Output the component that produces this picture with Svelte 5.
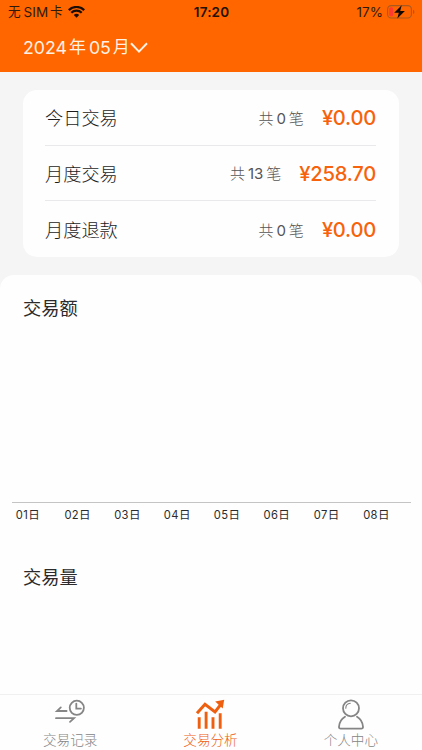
<script lang="ts">
  const month = { year: '2024', month: '05' };

  const summary = [
    { label: '今日交易', count: 0, amount: '0.00' },
    { label: '月度交易', count: 13, amount: '258.70' },
    { label: '月度退款', count: 0, amount: '0.00' },
  ];

  const days = ['01', '02', '03', '04', '05', '06', '07', '08'];

  const tabs = [
    { id: 'records', label: '交易记录' },
    { id: 'analysis', label: '交易分析' },
    { id: 'profile', label: '个人中心' },
  ];

  let activeTab = $state('analysis');
</script>

<div class="screen">
  <header>
    <div class="status-bar">
      <div class="carrier">
        <span class="cjk">无</span><span class="sim">SIM</span><span class="cjk">卡</span>
        <svg class="wifi" width="17" height="12" viewBox="0 0 17 12">
          <path d="M.8 4.1a11 11 0 0 1 15.4 0" />
          <path d="M3.3 6.7a7.4 7.4 0 0 1 10.4 0" />
          <path class="dot" d="M8.5 11.8 5.8 9a3.9 3.9 0 0 1 5.4 0z" />
        </svg>
      </div>
      <div class="clock">17:20</div>
      <div class="power">
        <span>17%</span>
        <svg width="28" height="14" viewBox="0 0 28 14">
          <rect class="shell" x=".6" y=".6" width="23.8" height="12.4" rx="3.6" />
          <rect class="level" x="2.2" y="2.3" width="4" height="9" rx="1.5" />
          <path class="tip" d="M26 4.8q1.4.6 1.4 2.1T26 9z" />
          <path class="bolt" d="M14.7.2 7.2 7.7h4.6L10.3 13.6 17.9 5.9h-4.7z" />
        </svg>
      </div>
    </div>
    <button class="month">
      <span class="num">{month.year}</span><span class="unit">年</span><span class="num">{month.month}</span><span class="unit">月</span>
      <svg width="18" height="12" viewBox="0 0 18 12">
        <path d="M1 1.2 9 9.6l8-8.4" />
      </svg>
    </button>
  </header>

  <main>
    <section class="card">
      {#each summary as row}
        <div class="row">
          <span class="label">{row.label}</span>
          <span class="count">共<i>{row.count}</i>笔</span>
          <span class="amount">¥{row.amount}</span>
        </div>
      {/each}
    </section>

    <section class="panel">
      <h2>交易额</h2>
      <div class="plot"></div>
      <div class="axis">
        {#each days as day}
          <span>{day}<b>日</b></span>
        {/each}
      </div>
      <h2 class="second">交易量</h2>
    </section>
  </main>

  <nav>
    {#each tabs as tab}
      <button class="tab" class:active={activeTab === tab.id} onclick={() => (activeTab = tab.id)}>
        {#if tab.id === 'records'}
          <svg width="32" height="32" viewBox="0 0 32 32">
            <circle cx="22.8" cy="8.8" r="7.1" />
            <path d="M22.3 4.6v5h4.6M12.6 12H3l3.8-3.6M2 19.2h18l-4 3.6" />
          </svg>
        {:else if tab.id === 'analysis'}
          <svg width="32" height="32" viewBox="0 0 32 32">
            <path class="trend" d="m3 14.3 8-9 10 7.6 6-7.6" />
            <path class="head" d="m21.2 2.6 9-1.8-1.5 8.6z" />
            <path class="bars" d="M5.2 18.2v11.5M12.1 12.7v17M19 18.2v11.5M26.2 14.2v15.5" />
          </svg>
        {:else}
          <svg width="32" height="32" viewBox="0 0 32 32">
            <circle cx="16" cy="9.3" r="8" />
            <path class="shine" d="M10.8 9.2c0-2.7 1.8-4.7 4.5-5" />
            <path d="M10 17.7C6 20 4.3 23.8 4 27.7c-.1 1.2.6 1.9 1.7 1.9h20.6c1.1 0 1.8-.7 1.7-1.9-.3-3.9-2-7.7-6-10" />
          </svg>
        {/if}
        <span>{tab.label}</span>
      </button>
    {/each}
  </nav>
</div>

<style>
  :global(body) {
    margin: 0;
  }

  .screen {
    display: flex;
    flex-direction: column;
    width: 422px;
    height: 750px;
    overflow: hidden;
    background: #f5f5f5;
    color: #2b2b2b;
    font-family: Inter, 'Noto Sans CJK SC', sans-serif;
  }

  button {
    padding: 0;
    border: 0;
    background: none;
    font: inherit;
  }

  svg {
    flex: none;
    fill: none;
    stroke: currentColor;
  }

  header {
    flex: none;
    height: 72px;
    background: #ff6600;
  }

  .status-bar {
    display: grid;
    grid-template-columns: 1fr auto 1fr;
    align-items: center;
    height: 24px;
    padding: 0 7px 0 8px;
    color: #30190a;
    font-size: 13.5px;
    line-height: 24px;
  }

  .carrier,
  .power {
    display: flex;
    align-items: center;
  }

  .carrier .cjk {
    font-size: 12.6px;
  }

  .carrier .sim {
    margin: 0 2px 0 3px;
  }

  .wifi {
    margin-left: 5px;
    color: #1b0d04;
    stroke-width: 2.2;
  }

  .wifi .dot {
    fill: currentColor;
    stroke: none;
  }

  .clock {
    color: #241105;
    font-weight: 600;
    letter-spacing: 0.15px;
  }

  .power {
    justify-content: flex-end;
    gap: 4px;
  }

  .power .shell {
    stroke: #a9581f;
    stroke-width: 1.1;
  }

  .power .level {
    fill: #ff3b30;
    stroke: none;
  }

  .power .tip {
    fill: #a9581f;
    stroke: none;
  }

  .power .bolt {
    fill: #120800;
    stroke: none;
  }

  .month {
    display: flex;
    align-items: center;
    height: 47px;
    padding-left: 23px;
    color: #fff1e4;
    font-size: 17.7px;
    line-height: 47px;
  }

  .month .unit {
    margin: 0 3px 0 2px;
    font-size: 17px;
  }

  .month .unit:last-of-type {
    margin-right: 0;
  }

  .month svg {
    stroke-width: 2;
  }

  main {
    flex: 1;
    display: flex;
    flex-direction: column;
    min-height: 0;
    padding-top: 18px;
  }

  .card {
    flex: none;
    margin: 0 23px;
    padding: 0 23px 0 22px;
    border-radius: 14px;
    background: #fefefe;
  }

  .row {
    display: flex;
    align-items: center;
    box-sizing: border-box;
    height: 55.67px;
    border-bottom: 1px solid #e9e9eb;
  }

  .row:last-child {
    border-bottom: 0;
  }

  .label {
    flex: 1;
    color: #1c1c1c;
    font-size: 18.2px;
    font-weight: 300;
  }

  .count {
    color: #555;
    font-size: 15px;
    font-weight: 300;
  }

  .count i {
    margin: 0 3px;
    font-style: normal;
    font-weight: 400;
  }

  .amount {
    margin-left: 18px;
    padding-top: 1px;
    color: #f7620a;
    font-size: 20.2px;
    font-weight: 450;
    letter-spacing: -0.25px;
  }

  .panel {
    flex: 1;
    margin-top: 18px;
    border-radius: 14px 14px 0 0;
    background: #fefefe;
  }

  h2 {
    margin: 0;
    padding: 20px 23px 0;
    font-size: 18.2px;
    font-weight: 400;
    line-height: 27px;
  }

  .plot {
    height: 180px;
    margin: 0 11px 0 12px;
    border-bottom: 1px solid #c4c4c4;
  }

  .axis {
    display: grid;
    grid-template-columns: repeat(8, 49.8px);
    padding-left: 3px;
    font-size: 11.2px;
    line-height: 24px;
    text-align: center;
    letter-spacing: 0.4px;
  }

  .axis b {
    font-size: 11.5px;
    font-weight: 400;
  }

  .second {
    padding-top: 37px;
  }

  nav {
    flex: none;
    display: grid;
    grid-template-columns: repeat(3, 1fr);
    height: 55px;
    padding-right: 1px;
    border-top: 1px solid #f0f0f0;
    background: #fefefe;
  }

  .tab {
    display: flex;
    flex-direction: column;
    align-items: center;
    padding-top: 4px;
    color: #858585;
    font-size: 13.6px;
    font-weight: 300;
    line-height: 19px;
  }

  .tab svg {
    stroke-width: 1.8;
    stroke-linecap: round;
  }

  .tab.active {
    color: #ee6010;
  }

  .tab .trend {
    stroke-width: 3;
    stroke-linecap: butt;
  }

  .tab .bars {
    stroke-width: 2.9;
    stroke-linecap: butt;
  }

  .tab .head {
    fill: currentColor;
    stroke: none;
  }

  .tab .shine {
    stroke-width: 1.1;
  }
</style>
